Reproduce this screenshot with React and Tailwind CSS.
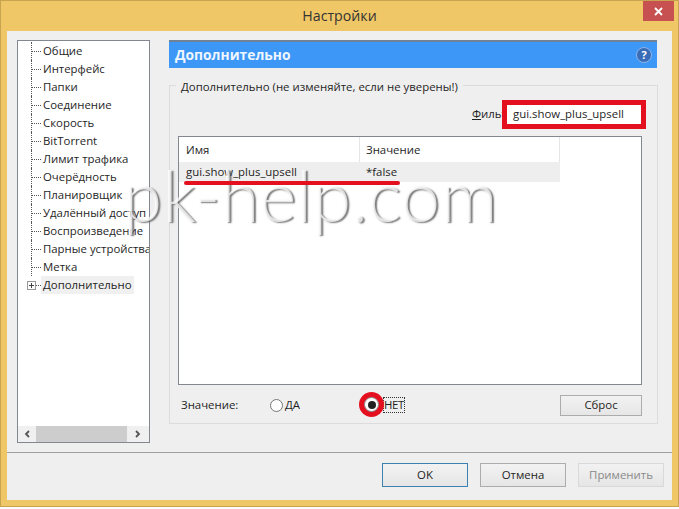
const TREE_ITEMS = [
  'Общие',
  'Интерфейс',
  'Папки',
  'Соединение',
  'Скорость',
  'BitTorrent',
  'Лимит трафика',
  'Очерёдность',
  'Планировщик',
  'Удалённый доступ',
  'Воспроизведение',
  'Парные устройства',
  'Метка',
];

function TreeRow({ label }) {
  return (
    <div className="flex h-[18px] items-center whitespace-nowrap">
      <div className="ml-[13px] flex h-full w-[10px] shrink-0 items-center border-l border-dotted border-[#555]">
        <div className="w-full border-t border-dotted border-[#555]" />
      </div>
      <span className="ml-[2px]">{label}</span>
    </div>
  );
}

function Button({ children, className = '' }) {
  return (
    <div className={`flex items-center justify-center border bg-gradient-to-b from-[#f2f2f2] to-[#e6e6e6] ${className}`}>
      {children}
    </div>
  );
}

export default function App() {
  return (
    <div className="relative h-[509px] w-[679px] overflow-hidden bg-white font-['Open_Sans','Noto_Sans',sans-serif] text-[11.4px] text-[#1f1f1f]">
      <div className="flex h-[507px] w-[679px] flex-col border border-[#c9a450] bg-[#f0c766] pb-[6px]">
        {/* Title bar */}
        <div className="relative flex h-[30px] shrink-0 items-center justify-center text-[14.2px] text-[#333]">
          Настройки
          <div className="absolute right-[4px] top-0 flex h-[20px] w-[31px] items-center justify-center bg-[#c75050] text-white">
            <svg width="9" height="9" viewBox="0 0 9 9"><path d="m1 1 7 7M8 1 1 8" stroke="#fff" strokeWidth="1.8" /></svg>
          </div>
        </div>

        {/* Client area */}
        <div className="mx-[6px] flex min-h-0 flex-1 flex-col bg-[#efefef]">
          <div className="flex flex-1 gap-[19px] pl-[10px] pt-[9px]">
            {/* Tree */}
            <div className="flex h-[403px] w-[133px] shrink-0 flex-col overflow-hidden border border-[#828790] bg-white">
              <div className="flex-1 overflow-hidden pt-[1px]">
                {TREE_ITEMS.map(item => (
                  <TreeRow key={item} label={item} />
                ))}
                <div className="flex h-[18px] items-center whitespace-nowrap">
                  <div className="ml-[9px] flex h-[9px] w-[9px] shrink-0 items-center justify-center border border-[#999] bg-white">
                    <svg width="5" height="5" viewBox="0 0 5 5"><path d="M0 2.5h5M2.5 0v5" stroke="#444" /></svg>
                  </div>
                  <div className="w-[5px] shrink-0 border-t border-dotted border-[#555]" />
                  <span className="bg-[#f0f0f0] pl-[2px] pr-[2px]">Дополнительно</span>
                </div>
              </div>
              <div className="flex h-[16px] items-center bg-[#f0f0f0]">
                <div className="flex w-[18px] justify-center">
                  <svg width="6" height="8" viewBox="0 0 6 8"><path d="M5 1 2 4l3 3" fill="none" stroke="#555" strokeWidth="1.8" /></svg>
                </div>
                <div className="h-full w-[91px] bg-[#cdcdcd]" />
                <div className="flex flex-1 justify-center">
                  <svg width="6" height="8" viewBox="0 0 6 8"><path d="m1 1 3 3-3 3" fill="none" stroke="#555" strokeWidth="1.8" /></svg>
                </div>
              </div>
            </div>

            {/* Right pane */}
            <div className="flex w-[489px] shrink-0 flex-col">
              <div className="flex h-[28px] w-[488px] items-center justify-between border-t-2 border-[#6f8296] bg-[#3c97f6] pl-[6px] pr-[5px] text-[13.8px] font-bold text-[#eef6ff]">
                <span>Дополнительно</span>
                <svg width="16" height="16" viewBox="0 0 16 16">
                  <circle cx="8" cy="8" r="7.5" fill="#3a6cb8" stroke="#8fb4e6" />
                  <text x="8" y="12" textAnchor="middle" fontSize="11" fontWeight="700" fill="#fff">?</text>
                </svg>
              </div>

              {/* Group box */}
              <div className="relative mt-[17px] h-[339px] border border-[#dcdcdc] px-[8px]">
                <div className="absolute left-[6px] top-[-9px] bg-[#efefef] px-[5px] leading-[19px]">
                  Дополнительно (не изменяйте, если не уверены!)
                </div>

                <div className="flex h-[50px] items-center justify-end pt-[6px]">
                  <span className="w-[30px] overflow-hidden whitespace-nowrap"><span className="underline">Ф</span>ильтр:</span>
                  <div className="mr-[3px] flex h-[29px] w-[144px] items-center border-[5px] border-[#e5101f] bg-white pl-[6px]">
                    gui.show_plus_upsell
                  </div>
                </div>

                {/* Table */}
                <div className="h-[249px] w-[464px] border border-[#828790] bg-white">
                  <div className="flex h-[25px] items-center">
                    <div className="flex h-full w-[181px] items-center border-r border-[#e5e5e5] pl-[7px]">Имя</div>
                    <div className="flex h-full w-[200px] items-center border-r border-[#e5e5e5] pl-[6px]">Значение</div>
                  </div>
                  <div className="flex h-[20px] w-[381px] items-center bg-[#eeeeee]">
                    <div className="w-[181px] pl-[7px]">gui.show_plus_upsell</div>
                    <div className="pl-[6px]">*false</div>
                  </div>
                </div>

                {/* Value row */}
                <div className="mt-[9px] flex h-[22px] items-center">
                  <span className="ml-[3px] w-[89px]">Значение:</span>
                  <div className="h-[13px] w-[13px] rounded-full border border-[#777] bg-white" />
                  <span className="ml-[2px] w-[81px]">ДА</span>
                  <div className="h-[13px] w-[13px]" />
                  <span className="ml-[4px] border border-dotted border-[#333] leading-[14px] tracking-[-0.4px]">НЕТ</span>
                  <Button className="ml-auto mr-[7px] h-[21px] w-[82px] border-[#acacac]">Сброс</Button>
                </div>
              </div>
            </div>
          </div>

          {/* Footer */}
          <div className="flex h-[48px] shrink-0 items-start justify-end gap-[12px] border-t border-[#a0a0a0] pr-[8px] pt-[10px]">
            <Button className="h-[24px] w-[86px] border-[#3c7fb1]">OK</Button>
            <Button className="h-[24px] w-[86px] border-[#acacac]">Отмена</Button>
            <Button className="h-[24px] w-[86px] border-[#d9d9d9] text-[#8a8a8a]">Применить</Button>
          </div>
        </div>
      </div>

      {/* Watermark and annotations lying over the screenshot */}
      <div className="pointer-events-none absolute left-[123px] top-[150px] whitespace-nowrap font-['Lato',sans-serif] text-[71px] font-light leading-[90px] text-white/75 [text-shadow:2px_1px_1.5px_rgba(90,90,90,0.8)]">
        pk-help.com
      </div>
      <div className="absolute left-[184px] top-[181px] h-[4px] w-[216px] rounded-full bg-[#e5101f]" />
      <div className="absolute left-[359px] top-[392px] flex h-[25px] w-[25px] items-center justify-center rounded-full bg-[#e5101f]">
        <div className="flex h-[15px] w-[15px] items-center justify-center rounded-full border border-[#888] bg-white">
          <div className="h-[8px] w-[8px] rounded-full bg-[#222]" />
        </div>
      </div>
    </div>
  );
}
